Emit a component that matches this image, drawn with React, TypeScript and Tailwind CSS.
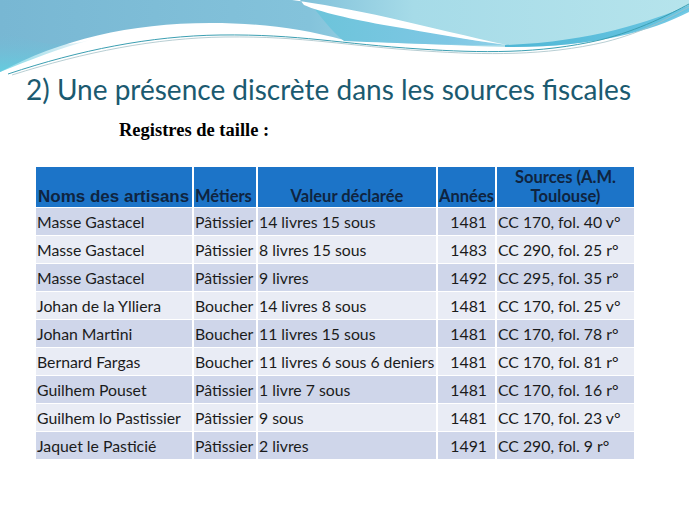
import React from "react";

const rows: [string, string, string, string, string][] = [
  ["Masse Gastacel", "Pâtissier", "14 livres 15 sous", "1481", "CC 170, fol. 40 v°"],
  ["Masse Gastacel", "Pâtissier", "8 livres 15 sous", "1483", "CC 290, fol. 25 r°"],
  ["Masse Gastacel", "Pâtissier", "9 livres", "1492", "CC 295, fol. 35 r°"],
  ["Johan de la Ylliera", "Boucher", "14 livres 8 sous", "1481", "CC 170, fol. 25 v°"],
  ["Johan Martini", "Boucher", "11 livres 15 sous", "1481", "CC 170, fol. 78 r°"],
  ["Bernard Fargas", "Boucher", "11 livres 6 sous 6 deniers", "1481", "CC 170, fol. 81 r°"],
  ["Guilhem Pouset", "Pâtissier", "1 livre 7 sous", "1481", "CC 170, fol. 16 r°"],
  ["Guilhem lo Pastissier", "Pâtissier", "9 sous", "1481", "CC 170, fol. 23 v°"],
  ["Jaquet le Pasticié", "Pâtissier", "2 livres", "1491", "CC 290, fol. 9 r°"],
];

function Waves() {
  return (
    <svg
      className="absolute left-0 top-0"
      width="689"
      height="90"
      viewBox="0 0 689 90"
    >
      <defs>
        <linearGradient id="gMain" x1="0" y1="0" x2="1" y2="0">
          <stop offset="0" stopColor="#78b7d3" />
          <stop offset="0.45" stopColor="#84c3db" />
          <stop offset="0.6" stopColor="#a6dbe8" />
          <stop offset="1" stopColor="#b6e4ec" />
        </linearGradient>
        <linearGradient id="gLeft" x1="0" y1="0" x2="0" y2="1">
          <stop offset="0" stopColor="#78b7d3" stopOpacity="0" />
          <stop offset="1" stopColor="#5ed3e3" />
        </linearGradient>
        <linearGradient id="gBand" x1="0" y1="0" x2="1" y2="0">
          <stop offset="0" stopColor="#6cc4da" />
          <stop offset="0.7" stopColor="#7ec7e4" />
          <stop offset="1" stopColor="#8fd0e8" />
        </linearGradient>
        <linearGradient id="gRight" x1="0" y1="0" x2="1" y2="0">
          <stop offset="0" stopColor="#3fb0d2" />
          <stop offset="1" stopColor="#5cc0e0" />
        </linearGradient>
      </defs>
      {/* main colored region */}
      <path
        d="M0,0 H689 V10 C650,30 590,48 510,47 C450,46 400,42 344,40 C300,28 260,23 210,23 C130,23 60,40 0,72 Z"
        fill="url(#gMain)"
      />
      <path
        d="M0,30 C40,45 60,48 90,40 C60,48 30,60 0,72 Z"
        fill="url(#gLeft)"
        opacity="0.8"
      />
      {/* band below swoosh */}
      <path
        d="M312,6 C330,12 370,20 420,30 C460,38 490,43 505,45 C470,46 420,44 344,41 C330,30 320,15 312,6 Z"
        fill="url(#gBand)"
      />
      {/* right darker band along boundary */}
      <path
        d="M505,45 C590,42 650,22 689,5 V12 C650,32 590,48 505,47 Z"
        fill="url(#gRight)"
        opacity="0.85"
      />
      {/* white swoosh */}
      <path
        d="M292,0 C320,4 350,9 390,18 C430,27 470,37 507,45 C470,40 430,33 390,26 C350,19 320,12 304,5 L300,0 Z"
        fill="#ffffff"
      />
      {/* thin lines */}
      <path
        d="M8,74 C80,50 150,36 220,35 C300,34 340,44 420,49 C480,53 540,54 600,40 C640,30 670,14 689,4"
        fill="none"
        stroke="#3c9fb2"
        strokeWidth="1"
      />
      <path
        d="M12,75 C85,52 155,38 225,37 C305,36 345,46 425,51 C485,55 545,56 605,42 C645,32 672,16 689,7"
        fill="none"
        stroke="#a6c2c8"
        strokeWidth="0.8"
      />
    </svg>
  );
}

export default function App() {
  return (
    <div className="relative w-[689px] h-[517px] overflow-hidden bg-white">
      <Waves />
      <div className="relative flex flex-col">
        <div
          className="pl-[26px] pt-[69px] h-[110px] text-[28px] leading-[40px] text-[#1b5a70]"
          style={{ fontFamily: "Lato, 'Open Sans', sans-serif" }}
        >
          2) Une présence discrète dans les sources fiscales
        </div>
        <div
          className="pl-[119px] mt-[9px] h-[48px] text-[18.5px] leading-[22px] font-bold text-black"
          style={{ fontFamily: "'Liberation Serif', 'DejaVu Serif', serif" }}
        >
          Registres de taille :
        </div>
        <div className="ml-[36px] w-[598px]" style={{ fontFamily: "Lato, 'Open Sans', sans-serif" }}>
          <div className="grid grid-cols-[158px_64px_180px_59px_137px] h-[41px] border-b border-white">
            <div
              className="flex items-end pl-[2px] pb-[1px] bg-[#1c74c8] border-r-2 border-white text-[17px] font-bold text-[#0f2440] leading-[19px] whitespace-nowrap"
              style={{ fontFamily: "'Liberation Sans', Arial, sans-serif" }}
            >
              Noms des artisans
            </div>
            <div className="flex items-end pl-[1px] pb-[1px] bg-[#1c74c8] border-r-2 border-white text-[16.5px] font-bold text-[#0f2440] leading-[19px] whitespace-nowrap">
              Métiers
            </div>
            <div className="flex items-end justify-center pb-[1px] bg-[#1c74c8] border-r-2 border-white text-[16.5px] font-bold text-[#0f2440] leading-[19px] whitespace-nowrap">
              Valeur déclarée
            </div>
            <div className="flex items-end justify-center pb-[1px] bg-[#1c74c8] border-r-2 border-white text-[16.5px] font-bold text-[#0f2440] leading-[19px] whitespace-nowrap">
              Années
            </div>
            <div className="flex items-end justify-center text-center pb-[1px] bg-[#1c74c8] text-[16.5px] font-bold text-[#0f2440] leading-[19px] whitespace-nowrap">
              Sources (A.M.
              <br />
              Toulouse)
            </div>
          </div>
          {rows.map((r, i) => {
            const bg = i % 2 === 0 ? "bg-[#cfd6ea]" : "bg-[#e9ecf5]";
            return (
              <div
                key={i}
                className={`grid grid-cols-[158px_64px_180px_59px_137px] h-[28px] border-b border-white text-[15.8px] leading-[27px] text-[#1b1b1b] ${bg}`}
              >
                <div className="pl-[1px] border-r-2 border-white whitespace-nowrap">{r[0]}</div>
                <div className="pl-[1px] border-r-2 border-white whitespace-nowrap">{r[1]}</div>
                <div className="pl-[1px] border-r-2 border-white whitespace-nowrap">{r[2]}</div>
                <div className="pr-[8px] text-right border-r-2 border-white whitespace-nowrap">{r[3]}</div>
                <div className="pl-[1px] whitespace-nowrap">{r[4]}</div>
              </div>
            );
          })}
        </div>
      </div>
    </div>
  );
}
